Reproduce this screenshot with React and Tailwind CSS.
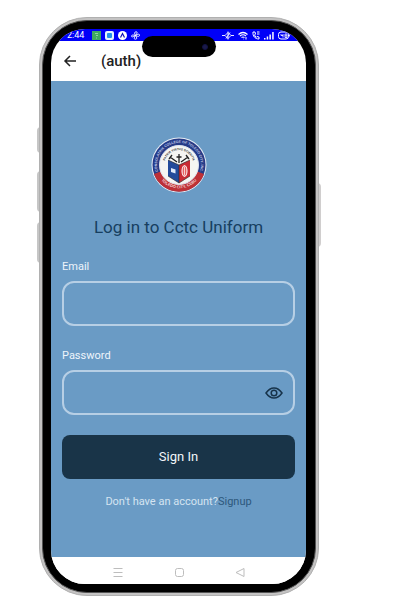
import { useState } from 'react';

function StatusBar() {
  return (
    <div className="flex h-3 items-center justify-between bg-[#0000f8] px-4 text-white">
      <div className="flex items-center gap-1">
        <span className="mr-1 text-[9px] leading-3">2:44</span>
        <svg className="h-[9px] w-[9px]" viewBox="0 0 9 9" aria-hidden="true">
          <rect width="9" height="9" fill="#3fa862" />
          <path d="M3 2.500h3M4 4.500h2M4 7h1" stroke="#a4dcb4" strokeWidth=".8" />
        </svg>
        <svg className="h-[9px] w-[9px]" viewBox="0 0 9 9" aria-hidden="true">
          <rect width="9" height="9" rx="2" fill="#e6f6ff" />
          <rect x="2" y="2" width="5" height="5" rx="1" fill="#2793e8" />
        </svg>
        <svg className="h-[9px] w-[9px]" viewBox="0 0 9 9" aria-hidden="true">
          <circle cx="4.5" cy="4.5" r="4.5" fill="#fff" />
          <path d="M2.5 6.5 4.5 2.5l2 4" fill="none" stroke="#1414b8" strokeWidth="1.2" />
        </svg>
        <svg className="h-[9px] w-[9px]" viewBox="0 0 9 9" fill="none" stroke="#fff" aria-hidden="true">
          <path d="M4.500 4.500Q2.500 1 5 .8t-.5 3.700Q8.500 2 8.500 4.200t-4 .3Q7 8 4.500 8.200t0-3.700Q.5 7 .5 5t4-.5" strokeWidth=".9" />
        </svg>
      </div>
      <div className="flex items-center gap-1">
        <svg className="h-[9px] w-3" viewBox="0 0 12 9" fill="none" stroke="#fff" aria-hidden="true">
          <path d="M0 4.500h3M9 4.500h3M6 .5v8M3 4.500l3-3 3 3-3 3-3-3ZM4 7.500l4-6" strokeWidth=".9" />
        </svg>
        <svg className="h-[9px] w-[10px]" viewBox="0 0 10 9" fill="none" stroke="#fff" aria-hidden="true">
          <path d="M.5 3.500Q5-.5 9.500 3.500M2 5q3-2.500 6 0M3.500 6.500q1.500-1 3 0" strokeWidth="1.200" />
          <path d="M5 8h.5M8 6v2.500" />
        </svg>
        <svg className="h-[9px] w-2" viewBox="0 0 8 9" fill="none" stroke="#fff" aria-hidden="true">
          <path d="M1 1c-.5 4 2 7 6 7V6L5 5.500 4 6.500 2.500 4 3.500 3 3 1H1Z" />
          <path d="M5 1h2.500M5 3h2.500" />
        </svg>
        <svg className="h-[9px] w-[10px]" viewBox="0 0 10 9" fill="#fff" aria-hidden="true">
          <path d="M0 7h1.500v1.500H0zM2.700 5.500h1.500v3H2.700zM5.400 3.500h1.500v5H5.400zM8.200 1h1.500v7.500H8.200z" />
        </svg>
        <svg className="h-[9px] w-3" viewBox="0 0 12 9" fill="none" stroke="#fff" aria-hidden="true">
          <rect x=".5" y="1" width="10" height="7" rx="2.500" />
          <path d="M11.500 3.500v2M3 3v1.500h2M5 3v3.500M7 3h2v3.500H7V3M7 4.800h2" strokeWidth=".8" />
        </svg>
      </div>
    </div>
  );
}

function Seal() {
  return (
    <svg className="mx-auto h-14 w-14" viewBox="0 0 56 56" role="img" aria-label="College seal">
      <defs>
        <path id="seal-top" d="M8.500 38A22 22 0 1 1 47.500 38" />
        <path id="seal-bottom" d="M6.500 38A24 24 0 0 0 49.500 38" />
        <path id="seal-inner" d="M15 34A14.500 14.500 0 1 1 41 34" />
      </defs>
      <circle cx="28" cy="28" r="27.500" fill="#e8edf5" />
      <circle cx="28" cy="28" r="26.500" fill="#263b87" />
      <path d="M3 37A26.500 26.500 0 0 0 53 37L45 34A18 18 0 0 1 11 34Z" fill="#bd3036" />
      <circle cx="28" cy="28" r="19.500" fill="#f5f5f2" stroke="#dfe4ef" />
      <g fontFamily="Liberation Sans, sans-serif" fontWeight="700" textAnchor="middle">
        <text fontSize="3.500" fill="#c3cdea">
          <textPath href="#seal-top" startOffset="50%">CONSOLATRIX COLLEGE OF TOLEDO CITY, INC.</textPath>
        </text>
        <text fontSize="4" fill="#f6dcdc">
          <textPath href="#seal-bottom" startOffset="50%">TOLEDO CITY, CEBU</textPath>
        </text>
        <text fontSize="3" fill="#333">
          <textPath href="#seal-inner" startOffset="50%">PATRIA VIRTUS SCIENTIA</textPath>
        </text>
      </g>
      <path d="M28 17v9M25.500 20h5M19 20l7 5M37 20l-7 5M18 22l3-4M38 22l-3-4" stroke="#222" strokeWidth="1.300" />
      <path d="M17 23 28 28V46L17 39Z" fill="#234b9b" />
      <path d="M39 23 28 28V46L39 39Z" fill="#c92b34" />
      <path d="M17 23 28 28 39 23M28 28V46M17 39l11 7 11-7" fill="none" stroke="#222" strokeWidth=".6" />
      <path d="m20 31 4.500 1.500v4L20 35Z" fill="#dfe9fa" />
      <ellipse cx="33.500" cy="34" rx="2.500" ry="5.500" fill="#e46060" stroke="#fff" />
      <path d="M33.500 29.500v9" stroke="#fff" strokeWidth=".7" />
    </svg>
  );
}

function LoginForm() {
  const [visible, setVisible] = useState(false);
  const field =
    'block h-[45px] w-full rounded-xl border-2 border-[#b7cfe5] bg-transparent px-3 text-sm text-white outline-none';
  return (
    <form
      className="bg-[#6a9bc5] px-[11px] pb-[47px] pt-14"
      onSubmit={(event) => event.preventDefault()}
    >
      <Seal />
      <h2 className="mt-6 text-center text-[17px] leading-5 text-[#173f60]">Log in to Cctc Uniform</h2>
      <label htmlFor="email" className="mt-[22px] block text-[11px] leading-4 text-[#eef5fb]">
        Email
      </label>
      <input id="email" type="email" className={`mt-1.5 ${field}`} />
      <label htmlFor="password" className="mt-[22px] block text-[11px] leading-4 text-[#eef5fb]">
        Password
      </label>
      <div className="relative mt-1.5">
        <input id="password" type={visible ? 'text' : 'password'} className={field} />
        <button
          type="button"
          aria-label="Show password"
          className="absolute inset-y-0 right-3 flex items-center"
          onClick={() => setVisible(!visible)}
        >
          <svg className="h-[18px] w-[18px]" viewBox="0 0 18 18" fill="none" stroke="#17334a" strokeWidth="1.500">
            <path d="M1 9Q4.500 4 9 4t8 5q-3.500 5-8 5T1 9Z" />
            <circle cx="9" cy="9" r="2.800" />
          </svg>
        </button>
      </div>
      <button type="submit" className="mt-5 block h-11 w-full rounded-lg bg-[#193448] text-[13px] text-[#f2f6f9]">
        Sign In
      </button>
      <p className="mt-[15px] text-center text-[11px] leading-4 text-[#d5e4f1]">
        Don't have an account?
        <a href="#signup" className="text-[#2d587c]">Signup</a>
      </p>
    </form>
  );
}

function NavBar() {
  return (
    <nav aria-label="System" className="flex h-[27px] items-center justify-center gap-[49px] bg-white pt-0.5 text-[#bdbdbd]">
      <button type="button" aria-label="Recent apps">
        <svg className="h-3 w-3" viewBox="0 0 12 12" fill="none" stroke="currentColor">
          <path d="M1.500 2.500h9M1.500 6.500h9M1.500 10.500h9" />
        </svg>
      </button>
      <button type="button" aria-label="Home">
        <svg className="h-3 w-3" viewBox="0 0 12 12" fill="none" stroke="currentColor">
          <rect x="2.500" y="2.500" width="8" height="8" rx="2" />
        </svg>
      </button>
      <button type="button" aria-label="Back">
        <svg className="h-3 w-3" viewBox="0 0 12 12" fill="none" stroke="currentColor" strokeLinejoin="round">
          <path d="M10 2.500v8L2 6.500Z" />
        </svg>
      </button>
    </nav>
  );
}

export default function App() {
  return (
    <main className="min-h-screen bg-white pb-5 pl-[39px] pr-5 pt-[17px] font-['Roboto',sans-serif]">
      <div className="relative w-full max-w-[280px]">
        <span className="absolute -left-0.5 top-[110px] h-[26px] w-1 rounded-l bg-[#c6c6c6]" />
        <span className="absolute -left-0.5 top-[154px] h-[41px] w-1 rounded-l bg-[#c6c6c6]" />
        <span className="absolute -left-0.5 top-[205px] h-[41px] w-1 rounded-l bg-[#c6c6c6]" />
        <span className="absolute -right-0.5 top-[166px] h-16 w-1 rounded-r bg-[#d0cece]" />
        <div className="relative rounded-[48px] border border-[#b0b0b0] bg-[#c4c3c3] p-0.5">
          <div className="rounded-[45px] border border-[#555] bg-black py-2 pl-2 pr-[9px]">
            <div className="overflow-hidden rounded-[34px] bg-white">
              <StatusBar />
              <header className="flex h-10 items-center gap-6 px-3">
                <button type="button" aria-label="Go back">
                  <svg className="h-[14px] w-[14px]" viewBox="0 0 14 14" fill="none" stroke="#222" strokeWidth="1.500">
                    <path d="M13 7H2M7 2 2 7l5 5" />
                  </svg>
                </button>
                <h1 className="text-[15px] font-medium text-[#222]">(auth)</h1>
              </header>
              <LoginForm />
              <NavBar />
            </div>
          </div>
        </div>
        <div className="absolute left-[103px] top-[19px] flex h-[21px] w-[74px] items-center justify-end rounded-full bg-black pr-2">
          <span className="h-1.5 w-1.5 rounded-full border border-[#111144] bg-[#1b1b48]" />
        </div>
      </div>
    </main>
  );
}
